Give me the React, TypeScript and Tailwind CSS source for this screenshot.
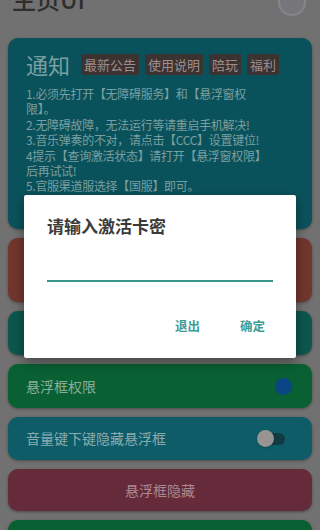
import React from "react";

const font = { fontFamily: '"Noto Sans CJK SC", "Noto Sans", sans-serif' };

const notice = [
  "1.必须先打开【无障碍服务】和【悬浮窗权",
  "限】。",
  "2.无障碍故障，无法运行等请重启手机解决!",
  "3.音乐弹奏的不对，请点击【CCC】设置键位!",
  "4提示【查询激活状态】请打开【悬浮窗权限】",
  "后再试试!",
  "5.官服渠道服选择【国服】即可。",
  "6.如遇音乐播放异常请更新最新版本后再试试",
];

const tags = ["最新公告", "使用说明", "陪玩", "福利"];

export default function App() {
  return (
    <div className="relative w-[320px] h-[530px] overflow-hidden bg-[#717171]" style={font}>
      {/* header */}
      <div className="h-[38px] flex justify-between pl-3 pr-[14px] overflow-hidden">
        <div className="text-[24px] leading-none -mt-[13px] text-[#2e2e2e] font-medium">主页UI</div>
        <div className="w-[28px] h-[28px] -mt-[12px] rounded-full border-2 border-[#85858c] bg-[#76767b]" />
      </div>

      {/* cards */}
      <div className="flex flex-col gap-[9px] px-2">
        <div className="rounded-[10px] bg-[#0a525b] shadow-[0_1px_3px_rgba(0,0,0,0.35)] pl-[18px] pr-3 pt-[13px] h-[191px] overflow-hidden">
          <div className="flex items-center gap-[6px]">
            <span className="text-[22px] leading-[26px] text-[#7a9fa0] mr-[5px]">通知</span>
            {tags.map((t) => (
              <span key={t} className="bg-[#3b3232] text-[#a08d89] text-[13px] leading-[21px] px-[3px] rounded-[2px]">
                {t}
              </span>
            ))}
          </div>
          <div className="mt-[9px] text-[12px] leading-[15.4px] text-[#7a9fa0] whitespace-nowrap tracking-[-0.3px]">
            {notice.map((l, i) => (
              <div key={i}>{l}</div>
            ))}
          </div>
        </div>

        <div className="rounded-[10px] bg-[#72362e] shadow-[0_1px_3px_rgba(0,0,0,0.35)] h-[64px]" />
        <div className="rounded-[10px] bg-[#0b574e] shadow-[0_1px_3px_rgba(0,0,0,0.35)] h-[44px]" />

        <div className="rounded-[10px] bg-[#096133] shadow-[0_1px_3px_rgba(0,0,0,0.35)] h-[44px] flex items-center justify-between pl-[18px] pr-[20px]">
          <span className="text-[14px] text-[#8aad9a]">悬浮框权限</span>
          <div className="w-[17px] h-[17px] rounded-full bg-[#0a4585]" />
        </div>

        <div className="rounded-[10px] bg-[#0d5c68] shadow-[0_1px_3px_rgba(0,0,0,0.35)] h-[43px] flex items-center justify-between pl-[18px] pr-[27px]">
          <span className="text-[14px] text-[#8aabae]">音量键下键隐藏悬浮框</span>
          <div className="relative w-[26px] h-[12px] rounded-full bg-[#113a41]">
            <div className="absolute -left-[2px] -top-[3px] w-[17px] h-[17px] rounded-full bg-[#989494] shadow" />
          </div>
        </div>

        <div className="rounded-[10px] bg-[#662b3a] shadow-[0_1px_3px_rgba(0,0,0,0.35)] h-[42px] flex items-center justify-center">
          <span className="text-[14px] text-[#ab8890]">悬浮框隐藏</span>
        </div>

        <div className="rounded-[10px] bg-[#096133] shadow-[0_1px_3px_rgba(0,0,0,0.35)] h-[44px]" />
      </div>

      {/* dialog */}
      <div className="absolute left-[24px] top-[195px] w-[272px] h-[163px] bg-white rounded-[2px] shadow-[0_4px_12px_rgba(0,0,0,0.4)] px-[23px] pt-[19px]">
        <div className="text-[17px] leading-[24px] font-bold text-[#3a3a3a]">请输入激活卡密</div>
        <div className="mt-[42px] h-[2px] bg-[#37958c]" />
        <div className="flex justify-end gap-[40px] mt-[35px] pr-[8px] text-[12.5px] font-bold text-[#3d9d96]">
          <span>退出</span>
          <span>确定</span>
        </div>
      </div>
    </div>
  );
}
